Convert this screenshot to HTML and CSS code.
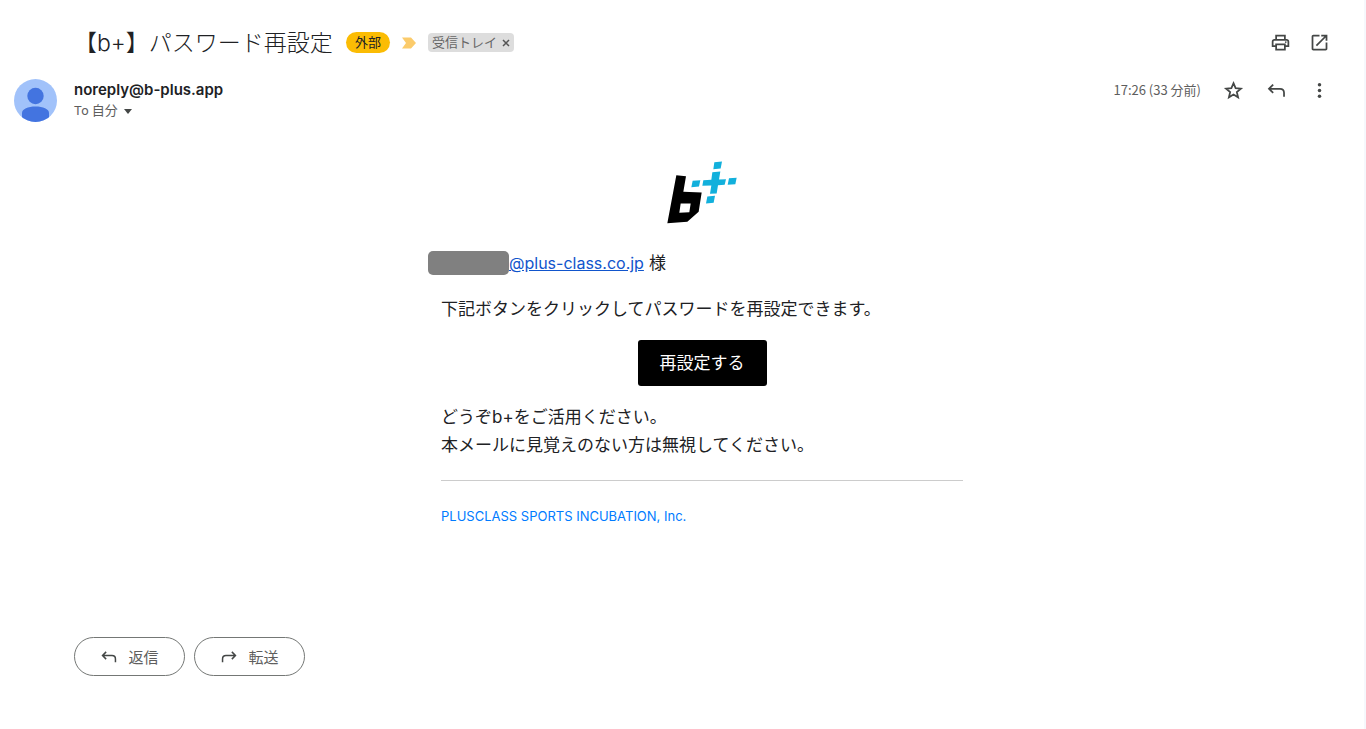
FILE: index.html
```html
<!DOCTYPE html>
<html lang="ja">
<head>
<meta charset="utf-8">
<meta name="viewport" content="width=device-width, initial-scale=1">
<title>【b+】 パスワード再設定</title>
<link rel="stylesheet" href="styles.css">
</head>
<body>
<main class="mail">
  <header class="subject-row">
    <h1 class="subject">【b+】パスワード再設定</h1>
    <span class="external">外部</span>
    <svg class="important" viewBox="0 0 14 12" aria-hidden="true"><path d="M0 .5h9L14 6l-5 5.500H0L4 6z" fill="#fbcb6b"/></svg>
    <span class="label">受信トレイ<button class="label-remove" type="button" aria-label="ラベルを削除"><svg viewBox="0 0 8 8"><path d="M1 1l6 6M7 1L1 7" stroke="#555" stroke-width="1.500"/></svg></button></span>
    <div class="tools">
      <button class="icon" type="button" aria-label="印刷"><svg viewBox="0 0 24 24"><path d="M19 8h-1V3H6v5H5c-1.660 0-3 1.340-3 3v6h4v4h12v-4h4v-6c0-1.660-1.340-3-3-3zM8 5h8v3H8V5zm8 14H8v-4h8v4zm2-4v-2H6v2H4v-4c0-.55.45-1 1-1h14c.55 0 1 .45 1 1v4h-2z"/><circle cx="18" cy="11.500" r="1"/></svg></button>
      <button class="icon" type="button" aria-label="新しいウィンドウ"><svg viewBox="0 0 24 24"><path d="M19 19H5V5h7V3H5c-1.110 0-2 .9-2 2v14c0 1.100.89 2 2 2h14c1.100 0 2-.9 2-2v-7h-2v7zM14 3v2h3.590l-9.830 9.830 1.410 1.410L19 6.410V10h2V3h-7z"/></svg></button>
    </div>
  </header>

  <section class="sender-row">
    <svg class="avatar" viewBox="0 0 43 43" role="img" aria-label="noreply@b-plus.app"><defs><clipPath id="disc"><circle cx="21.500" cy="21.500" r="21.500"/></clipPath></defs><g clip-path="url(#disc)"><path d="M0 0h43v43H0z" fill="#a1c2fa"/><circle cx="21.500" cy="17" r="8.200" fill="#4374e0"/><path d="M8 43v-9c0-4 6-6.500 13.500-6.500S35 30 35 34v9z" fill="#4374e0"/></g></svg>
    <div class="sender">
      <strong class="from">noreply@b-plus.app</strong>
      <button class="to" type="button">To 自分<svg viewBox="0 0 8 5" aria-hidden="true"><path d="M0 0h8L4 5z"/></svg></button>
    </div>
    <time class="time">17:26 (33 分前)</time>
    <div class="tools tools-sender">
      <button class="icon" type="button" aria-label="スター"><svg viewBox="0 0 24 24"><path d="M12 3.600l2.400 5.700 6.100.5-4.700 4 1.450 6L12 16.600l-5.250 3.200 1.450-6-4.700-4 6.100-.5z" class="stroke"/></svg></button>
      <button class="icon" type="button" aria-label="返信"><svg viewBox="0 0 24 24"><path d="M8.200 5.200L3.400 10l4.800 4.800M3.800 10H16c3 0 4.600 1.700 4.600 4.500V19" class="stroke"/></svg></button>
      <button class="icon" type="button" aria-label="その他"><svg viewBox="0 0 24 24"><circle cx="12" cy="5.500" r="2"/><circle cx="12" cy="12" r="2"/><circle cx="12" cy="18.500" r="2"/></svg></button>
    </div>
  </section>

  <article class="message">
    <svg class="logo" viewBox="0 0 210 188" role="img" aria-label="b+"><path transform="translate(-51 -33)" fill-rule="evenodd" d="M79 75l29 3-8 47 55 2-9 58-34 30-60 4zM92 160l-4 28 30-2 4-26z"/><path transform="translate(-51 -33)" fill="#12b0dc" d="M193 36l23-2-4 21-22 2zM128 92l23-2-4 19-23 2zM187 66l24-2-4 24 21-1-4 17-20 1-4 25-20 1 4-25-27 1 3-17 24-1zM237 84l23-1-4 19-23 2zM172 139l23-2-4 21-23 2z"/></svg>
    <p class="recipient"><span class="redacted"></span><a href="mailto:@plus-class.co.jp">@plus-class.co.jp</a><span class="honorific">様</span></p>
    <p class="text">下記ボタンをクリックしてパスワードを再設定できます。</p>
    <a class="reset" href="#reset">再設定する</a>
    <p class="text">どうぞb+をご活用ください。<br>本メールに見覚えのない方は無視してください。</p>
    <hr class="rule">
    <a class="company" href="#company">PLUSCLASS SPORTS INCUBATION, Inc.</a>
  </article>

  <footer class="actions">
    <button class="action" type="button"><svg viewBox="0 0 24 24" aria-hidden="true"><path d="M8.200 5.200L3.400 10l4.800 4.800M3.800 10H16c3 0 4.600 1.700 4.600 4.500V19" class="stroke"/></svg>返信</button>
    <button class="action" type="button"><svg viewBox="0 0 24 24" aria-hidden="true"><path d="M15.800 5.200l4.800 4.800-4.800 4.800M20.200 10H8c-3 0-4.600 1.700-4.600 4.500V19" class="stroke"/></svg>転送</button>
  </footer>
</main>
</body>
</html>
```
FILE: styles.css
```css
* { box-sizing: border-box; }
body {
  margin: 0;
  background: #fff;
  color: #202124;
  font-family: Inter, "Noto Sans CJK JP", sans-serif;
}
button {
  padding: 0;
  border: 0;
  background: none;
  color: inherit;
  font: inherit;
  cursor: pointer;
}
svg { display: block; }
p, h1 { margin: 0; }
.mail {
  min-height: 100vh;
  padding: 21px 34px 0 74px;
  border-right: 2px solid #f6f8fc;
}
.subject-row {
  display: flex;
  align-items: center;
  height: 43px;
}
.subject {
  font: 300 23px/32px Inter, "Noto Sans CJK JP", sans-serif;
}
.external {
  margin-left: 13px;
  padding: 0 9px;
  border-radius: 11px;
  background: #fbbc04;
  font-size: 13px;
  line-height: 21px;
}
.important {
  width: 14px;
  height: 12px;
  margin: 0 12px 0 12px;
}
.label {
  display: flex;
  align-items: center;
  gap: 5px;
  padding: 0 4px;
  border-radius: 4px;
  background: #ddd;
  color: #666;
  font-size: 13px;
  line-height: 19px;
}
.label-remove svg { width: 8px; height: 8px; }
.tools {
  display: flex;
  gap: 18px;
  margin-left: auto;
}
.icon svg {
  width: 21px;
  height: 21px;
  fill: #444746;
}
.icon .stroke, .action .stroke {
  fill: none;
  stroke: #444746;
  stroke-width: 2;
}
.sender-row {
  display: flex;
  align-items: flex-start;
  margin-left: -60px;
  padding-top: 15px;
}
.avatar {
  flex: none;
  width: 43px;
  height: 43px;
  margin-right: 17px;
}
.sender {
  display: flex;
  flex-direction: column;
  align-items: flex-start;
}
.from {
  font-size: 15px;
  font-weight: 600;
  line-height: 21px;
}
.to {
  display: flex;
  align-items: center;
  gap: 6px;
  color: #5e5e5e;
  font: 13px/22px Roboto, "Noto Sans CJK JP", sans-serif;
}
.to svg { width: 8px; height: 5px; fill: #444746; }
.time {
  margin-left: auto;
  color: #5e5e5e;
  font: 13px/21px "Noto Sans CJK JP", sans-serif;
}
.tools-sender {
  gap: 22px;
  margin-left: 22px;
  padding-top: 1px;
}
.message {
  display: flex;
  flex-direction: column;
  width: 522px;
  max-width: 100%;
  margin: 39px auto 0;
}
.logo {
  align-self: center;
  width: 70px;
  height: 63px;
}
.recipient {
  display: flex;
  align-items: center;
  height: 28px;
  margin: 25px 0 18px -13px;
  font-size: 17px;
}
.recipient a {
  color: #15c;
  font-size: 16px;
  line-height: 24px;
}
.honorific {
  margin-left: 5px;
  line-height: 24px;
}
.redacted {
  width: 81px;
  height: 24px;
  border-radius: 5px;
  background: #808080;
}
.text {
  font-size: 17px;
  line-height: 28px;
}
.reset {
  align-self: center;
  margin: 17px 0;
  padding: 0 22px;
  border-radius: 3px;
  background: #000;
  color: #fff;
  font-size: 17px;
  line-height: 46px;
  text-decoration: none;
}
.rule {
  width: 100%;
  margin: 21px 0 24px;
  border: 0;
  border-top: 1px solid #ccc;
}
.company {
  color: #007bff;
  font-size: 13px;
  line-height: 22px;
  text-decoration: none;
}
.actions {
  display: flex;
  gap: 9px;
  margin-top: 110px;
}
.action {
  display: flex;
  align-items: center;
  justify-content: center;
  gap: 10px;
  width: 111px;
  height: 39px;
  border: 1px solid #747775;
  border-radius: 20px;
  color: #5e5e5e;
  font-size: 15px;
}
.action svg { width: 18px; height: 18px; }
```
